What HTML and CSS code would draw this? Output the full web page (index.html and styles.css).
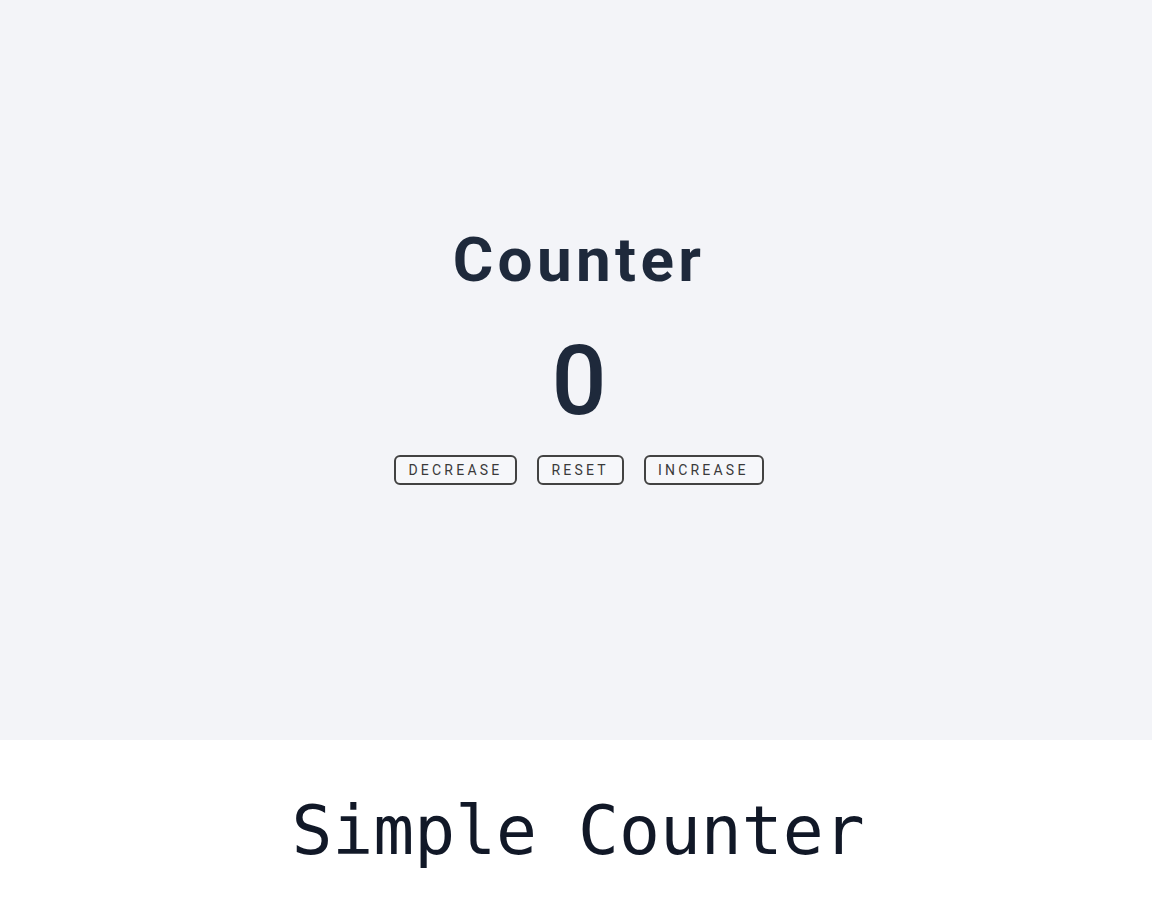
FILE: index.html
```html
<!DOCTYPE html>
<html lang="en">
<head>
<meta charset="utf-8">
<title>Simple Counter</title>
<link rel="stylesheet" href="styles.css">
</head>
<body>
<main class="stage">
  <h1 class="title">Counter</h1>
  <div class="count">0</div>
  <div class="controls">
    <button class="btn" type="button">Decrease</button>
    <button class="btn" type="button">Reset</button>
    <button class="btn" type="button">Increase</button>
  </div>
</main>
<footer class="caption">
  <h2 class="caption-text">Simple Counter</h2>
</footer>
</body>
</html>
```

FILE: styles.css
```css
html, body {
  margin: 0;
  padding: 0;
}
body {
  background: #ffffff;
  font-family: Roboto, "Liberation Sans", sans-serif;
  color: #1e293b;
}
.stage {
  box-sizing: border-box;
  height: 740px;
  padding: 0 0 32px 6px;
  background: #f3f4f8;
  display: flex;
  flex-direction: column;
  align-items: center;
  justify-content: center;
}
.title {
  margin: 0;
  font-size: 62px;
  font-weight: 700;
  letter-spacing: 0.07em;
  line-height: 1.2;
  color: #1e293b;
}
.count {
  margin-top: 35px;
  font-size: 97px;
  font-weight: 500;
  line-height: 1;
  color: #1e293b;
}
.controls {
  margin-top: 25px;
  display: flex;
  gap: 20px;
}
.btn {
  box-sizing: border-box;
  font-family: Roboto, "Liberation Sans", sans-serif;
  font-size: 14px;
  font-weight: 400;
  text-transform: uppercase;
  letter-spacing: 0.23em;
  color: #3a3a3a;
  background: #f6f7fa;
  border: 2px solid #424242;
  border-radius: 6px;
  height: 30px;
  padding: 0 13px 0 12px;
  line-height: 1;
}
.caption {
  height: 180px;
  display: flex;
  align-items: center;
  justify-content: center;
  padding-left: 4px;
}
.caption-text {
  margin: 0;
  font-family: "DejaVu Sans Mono", "Liberation Mono", monospace;
  font-size: 68px;
  font-weight: 400;
  color: #111827;
}
```
